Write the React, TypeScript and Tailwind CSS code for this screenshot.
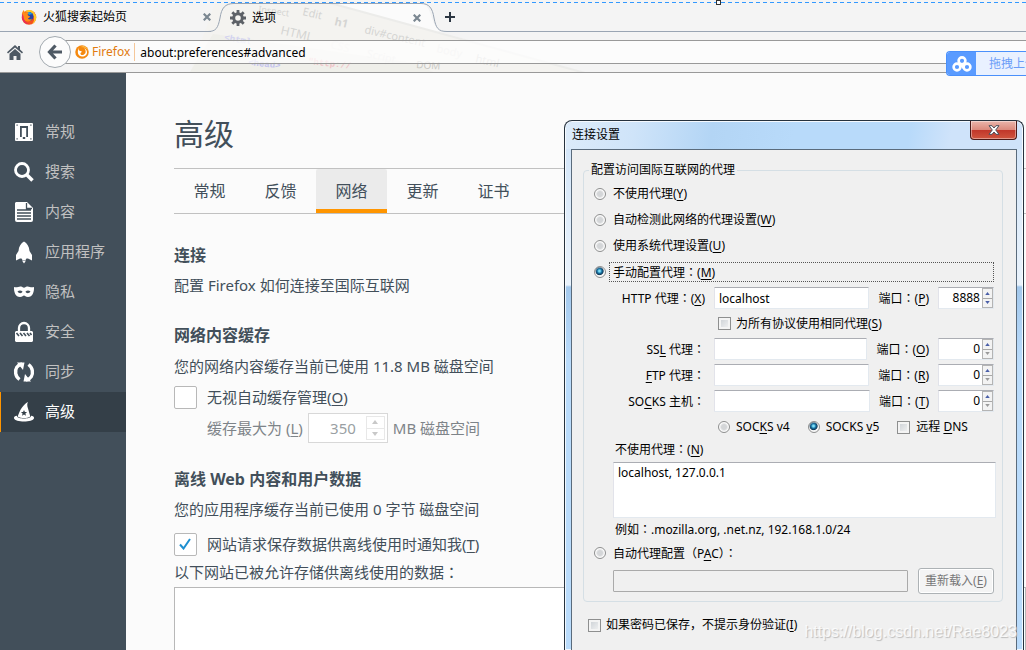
import { useState, type ReactNode } from 'react'

const Key = ({ children }: { children: string }) => <span className="underline underline-offset-2">{children}</span>

/** Full width colon, centred in its cell */
const Colon = () => (
  <span lang="zh-TW" className="font-['Noto_Sans_CJK_TC',sans-serif]">
    ：
  </span>
)

const FirefoxLogo = () => (
  <svg viewBox="0 0 32 32" className="h-4 w-4 shrink-0">
    <circle cx="16" cy="17" r="14.500" fill="#f4511e" />
    <path d="M8 5c4-4 13-4 17 0l5 8c2 9-3 15-8 17 5-5 5-11 3-16-3-6-10-8-17-9z" fill="#ffc928" />
    <circle cx="16" cy="15" r="9" fill="#2743a6" />
    <path d="M12 7c4-2 9 0 11 4-3-1-5 0-7 1z" fill="#1ba4e8" />
    <path d="M2 8l3-6 3 5c3-2 6-1 8 1-3 1-3 3-2 5 2 1 4 1 4 3l-4 3c1 2 5 3 8 0-2 8-14 8-17 0C3 16 1 12 2 8z" fill="#ff8a17" />
    <path d="M2 9l1 12c2 6 8 10 14 9C8 28 5 21 5 14z" fill="#e5226b" />
  </svg>
)

const IdentityLogo = () => (
  <svg viewBox="0 0 28 28" className="h-[14px] w-[14px] shrink-0">
    <circle cx="14" cy="14" r="13.500" fill="#f5890f" />
    <path d="M9 5c-3 5-1 7 3 7 3 1 1 3-1 4-1 3 3 6 7 3 5-3 4-9 0-13 6 3 8 10 4 14-5 5-14 4-16-3-1-5 0-9 3-12z" fill="#fff" />
    <path d="M11 4l6-2c5 1 8 5 9 10-2-5-7-8-15-8z" fill="#ffc04a" />
  </svg>
)

const Gear = () => (
  <svg viewBox="0 0 16 16" className="h-4 w-4 shrink-0" fill="none" stroke="#5d6167">
    <circle cx="8" cy="8" r="4.300" strokeWidth="3" />
    <path d="M8 0v3M8 13v3M0 8h3M13 8h3M2.300 2.300l2.200 2.200M11.500 11.500l2.200 2.200M2.300 13.700l2.200-2.200M11.500 4.500l2.200-2.200" strokeWidth="2.800" />
  </svg>
)

const CloseMark = ({ color }: { color: string }) => (
  <svg viewBox="0 0 8 8" className="h-2 w-2" stroke={color} strokeWidth="2.200">
    <path d="M.7.7l6.600 6.600M7.300.7L.7 7.300" />
  </svg>
)

/* Faint slanted inspector text behind the toolbar */
const ThemeArt = () => (
  <svg className="absolute top-0 left-[190px] h-[73px] w-[400px]" viewBox="190 0 400 73" aria-hidden="true">
    <path d="M215 3H330L585 73H190z" fill="#f4f3f0" />
    <path d="M234 4h186c15 0 8 27 25 27h-10L330 3z" fill="#fcfcfc" opacity=".8" />
    <path d="M330 3h90c15 2 8 28 20 29L585 73z" fill="#fbfbfb" />
    <path d="M213 34l200 29 20 9H190z" fill="#ecece7" opacity=".7" />
    <path d="M330 3l255 70" stroke="#ececea" strokeWidth="2" />
    <g fontFamily="Noto Sans" fontSize="11" fill="#d5d5d3">
      <text x="258" y="12" transform="rotate(8 258 12)" fontSize="9">Inspect</text>
      <text x="302" y="15" transform="rotate(13 302 15)">Edit</text>
      <text x="280" y="34" transform="rotate(13 280 34)" fontSize="12">HTML</text>
      <text x="334" y="25" transform="rotate(13 334 25)" fontWeight="bold">h1</text>
      <text x="364" y="33" transform="rotate(13 364 33)" fontSize="11">div#content</text>
      <text x="436" y="52" transform="rotate(13 436 52)" fill="#e5e5e4">body</text>
      <text x="475" y="62" transform="rotate(13 475 62)">html</text>
      <text x="330" y="48" transform="rotate(13 330 48)" fill="#ececeb">CSS</text>
      <text x="366" y="57" transform="rotate(13 366 57)" fill="#e6e6e5">Script</text>
      <text x="416" y="68" transform="rotate(4 416 68)" fill="#c9c9c5" fontSize="10">DOM</text>
    </g>
    <g fontFamily="Liberation Mono" fontSize="9" fontWeight="bold">
      <text x="224" y="40" transform="rotate(10 224 40)" fill="#d3d3f0">&lt;html</text>
      <text x="248" y="65" transform="rotate(6 248 65)" fill="#c3c3ee">&lt;head&gt;</text>
      <text x="308" y="64" transform="rotate(6 308 64)" fill="#f0c4c8">"http://</text>
    </g>
  </svg>
)

const navItems: { name: string; icon: ReactNode }[] = [
  {
    name: '常规',
    icon: (
      <>
        <path fillRule="evenodd" d="M2 1h16a1 1 0 011 1v16a1 1 0 01-1 1H2a1 1 0 01-1-1V2a1 1 0 011-1zM6 4v11h1.800V6h4.400v9H14V4z" />
        <path d="M8.800 15h2.400v2H8.800z" fill="#424f5a" />
        <path d="M2.500 2.500h1.200v1.200H2.500zM16.300 2.500h1.200v1.200h-1.200zM2.500 16.300h1.200v1.200H2.500zM16.300 16.300h1.200v1.200h-1.200z" fill="#424f5a" />
      </>
    ),
  },
  {
    name: '搜索',
    icon: (
      <g fill="none" stroke="currentColor">
        <circle cx="8" cy="8" r="6.500" strokeWidth="2.800" />
        <path d="M12.500 12.500l6 6" strokeWidth="3.500" />
      </g>
    ),
  },
  {
    name: '内容',
    icon: (
      <>
        <path d="M2 0h11l6 6v12a2 2 0 01-2 2H3a2 2 0 01-2-2V1z" />
        <path d="M12.500 1v5.500H18M3 8h14M3 11h14M3 14h14M3 17h14" stroke="#424f5a" strokeWidth="1.300" fill="none" />
      </>
    ),
  },
  {
    name: '应用程序',
    icon: <path d="M10-.5C7 1 4.800 4.500 4.500 9L2 13v5.500l4-2h1.500l1 1.500h3l1-1.500H14l4 2V13l-2.500-4C15.200 4.500 13 1 10-.5zM8 18.500h4L10 21.500z" />,
  },
  {
    name: '隐私',
    icon: (
      <path
        fillRule="evenodd"
        d="M0 5c3 1 5-1 7-.5 1.500.3 2 1.200 3 1.200s1.500-.9 3-1.200c2-.5 4 1.500 7 .5.300 5-1.500 10-6 10-2.500 0-3-1.500-4-1.500S8.500 15 6 15C1.500 15-.3 10 0 5zm3.500 4.500C5 12 8 11.500 8.500 9.500 7 8 5 8 3.500 9.500zm8 0c.5 2 3.500 2.500 5 0-1.500-1.500-3.500-1.500-5 0z"
      />
    ),
  },
  {
    name: '安全',
    icon: (
      <>
        <path d="M5 9V6a5 5 0 0110 0v3" fill="none" stroke="currentColor" strokeWidth="2.300" />
        <path d="M2 9h16l1 1v9l-1 1H2l-1-1v-9z" />
        <path d="M2.500 11l2.500 3M6 11l2.500 3M9.500 11l2.500 3M13 11l2.500 3M16 11l1.500 2" stroke="#424f5a" strokeWidth="1.600" />
      </>
    ),
  },
  {
    name: '同步',
    icon: (
      <>
        <path d="M8 2C3 3 1 7 1.700 11.500 2.100 14 3.500 16 5.500 17.500M12 18c5-1 7-5 6.300-9.500C17.900 6 16.500 4 14.500 2.500" fill="none" stroke="currentColor" strokeWidth="3.400" />
        <path d="M3 .5h7.500L9 8zM17 19.500H9.500L11 12z" />
      </>
    ),
  },
  {
    name: '高级',
    icon: (
      <>
        <path d="M14 0c-1.200 2-.8 4 0 6.500l2.300 8c-3.500 2-9 2-12.600 0C5 11 6 8 8 5.500 9.500 3.500 11.500 1 14 0z" />
        <path d="M10 8l.9 2.100h2.200l-1.700 1.500.6 2.200-2-1.300-2 1.300.6-2.200-1.700-1.500h2.200z" fill="#343f48" />
        <path d="M3 13.800c-2 .3-3.300 1.200-3 2.400 1 4.400 19 4.400 20 0 .3-1.200-1-2.100-3-2.400.5 3.700-14.500 3.700-14 0z" />
      </>
    ),
  },
]

const BrowserChrome = () => (
  <header className="relative shrink-0 bg-[#f4f4f4] text-xs text-black">
    <ThemeArt />
    <div className="absolute inset-x-0 top-[2px] h-px bg-[repeating-linear-gradient(90deg,#3399ff_0_4px,transparent_4px_7px)]" />
    <span className="absolute top-0 left-[716px] h-[5px] w-[5px] border border-[#333] bg-white" />

    <div className="relative flex h-8 items-stretch pt-[3px]">
      <div className="flex w-[211px] items-center gap-[6px] border-b border-[#9aa5b3] pl-[21px]">
        <FirefoxLogo />
        <button className="flex-1 text-left">火狐搜索起始页</button>
        <button aria-label="关闭标签页">
          <CloseMark color="#7b8791" />
        </button>
      </div>
      <svg viewBox="0 0 26 29" className="-ml-[3px] h-[29px] w-[26px] shrink-0" fill="none" stroke="#9aa5b3">
        <path d="M0 28.500C8 28.500 10 25 12 15 13.500 5 17 .5 26 .5" />
      </svg>
      <div className="flex w-[187px] items-center gap-[6px] border-t border-[#9aa5b3]">
        <span className="-ml-1 flex">
          <Gear />
        </span>
        <button className="flex-1 text-left">选项</button>
        <button aria-label="关闭标签页">
          <CloseMark color="#7b8791" />
        </button>
      </div>
      <svg viewBox="0 0 26 29" className="h-[29px] w-[26px] shrink-0" fill="none" stroke="#9aa5b3">
        <path d="M26 28.500C17 28.500 15 25 13 15 11.500 5 8 .5 0 .5" />
      </svg>
      <div className="flex flex-1 items-center border-b border-[#9aa5b3]">
        <button aria-label="打开新标签页" className="-ml-[2px]">
          <svg viewBox="0 0 10 10" className="h-[10px] w-[10px]" stroke="#2b3642" strokeWidth="2">
            <path d="M5 0v10M0 5h10" />
          </svg>
        </button>
      </div>
    </div>

    <div className="relative flex h-[41px] items-center border-b border-[#999] pl-[7px]">
      <button aria-label="主页">
        <svg viewBox="0 0 16 15" className="h-[15px] w-4" fill="#4e5964">
          <path d="M8 0l3 2.700V1h2v3.600L16 7.300l-1 1.200-7-6-7 6L0 7.300z" />
          <path d="M8 4l5.500 4.700V15H9.500v-4h-3v4h-4V8.700z" />
        </svg>
      </button>
      <button
        aria-label="后退"
        className="relative z-10 ml-4 flex h-8 w-8 shrink-0 items-center justify-center rounded-full border border-[#a3aab0] bg-[#fcfcfc]"
      >
        <svg viewBox="0 0 16 16" className="h-4 w-4" fill="none" stroke="#4e5964" strokeWidth="3.200">
          <path d="M8.500 1.500L2.500 8l6 6.500M3 8h12" />
        </svg>
      </button>
      <div className="-ml-2 flex h-6 flex-1 items-center border-y border-[#999] bg-white/70 pl-3">
        <IdentityLogo />
        <span className="ml-[3px] text-[#e17b10]">Firefox</span>
        <span className="mr-[5px] ml-1 h-[18px] w-px bg-[#f5c79a]" />
        <input className="h-5 flex-1 bg-transparent text-xs outline-none" aria-label="地址" defaultValue="about:preferences#advanced" />
      </div>
    </div>
  </header>
)

const CheckBox = ({ checked, onChange, children }: { checked: boolean; onChange: () => void; children: ReactNode }) => (
  <label className="flex h-6 items-center gap-[10px]">
    <span className="relative flex h-[23px] w-[23px]">
      <input
        type="checkbox"
        checked={checked}
        onChange={onChange}
        className="h-[23px] w-[23px] appearance-none rounded-[2px] border border-[#b8b8b8] bg-white"
      />
      {checked && (
        <svg viewBox="0 0 12 12" className="pointer-events-none absolute top-[5px] left-[5px] h-3 w-3" fill="none" stroke="#1e8fd0" strokeWidth="2">
          <path d="M1 6.500L4.500 10.500 11 1" />
        </svg>
      )}
    </span>
    <span>{children}</span>
  </label>
)

const Preferences = () => {
  const [override, setOverride] = useState(false)
  const [notify, setNotify] = useState(true)

  return (
    <main className="min-w-0 flex-1 bg-[#fbfbfb] pt-[38px] pl-12 text-[15px] leading-[22px] text-[#424f5a]">
      <h1 className="text-[30px] leading-[45px]">高级</h1>
      <div className="mt-3 flex h-[46px] border-y border-[#c1c1c1] text-base">
        {['常规', '反馈', '网络', '更新', '证书'].map((tab) => (
          <button
            key={tab}
            className={`w-[71px] border-b-4 pt-1 ${tab === '网络' ? 'rounded-t-xs border-[#ff9500] bg-[#ebebeb]' : 'border-transparent'}`}
          >
            {tab}
          </button>
        ))}
      </div>

      <section className="mt-[29px]">
        <h2 className="text-base font-bold">连接</h2>
        <p className="mt-[7px]">配置 Firefox 如何连接至国际互联网</p>
      </section>

      <section className="mt-[27px]">
        <h2 className="text-base font-bold">网络内容缓存</h2>
        <p className="mt-2">您的网络内容缓存当前已使用 11.8 MB 磁盘空间</p>
        <div className="mt-2">
          <CheckBox checked={override} onChange={() => setOverride(!override)}>
            无视自动缓存管理(<Key>O</Key>)
          </CheckBox>
        </div>
        <div className="mt-1 flex h-[30px] items-center pl-[33px] text-[#7e8489]">
          <label htmlFor="cache">
            缓存最大为 (<Key>L</Key>)
          </label>
          <span className="mx-[5px] flex h-[30px] w-20 items-center border border-[#d8d8d8] bg-white pr-[2px]">
            <input id="cache" disabled defaultValue="350" className="w-[57px] pr-[10px] text-right text-[#9a9fa3]" />
            <span className="flex h-6 w-[19px] flex-col border border-[#e8e8e8] text-[#c8c8c8]">
              <button disabled aria-label="增加" className="flex flex-1 items-center justify-center border-b border-[#e8e8e8]">
                <svg viewBox="0 0 6 4" className="h-1 w-[6px]" fill="currentColor"><path d="M0 4l3-4 3 4z" /></svg>
              </button>
              <button disabled aria-label="减少" className="flex flex-1 items-center justify-center">
                <svg viewBox="0 0 6 4" className="h-1 w-[6px]" fill="currentColor"><path d="M0 0l3 4 3-4z" /></svg>
              </button>
            </span>
          </span>
          <span>MB 磁盘空间</span>
        </div>
      </section>

      <section className="mt-6">
        <h2 className="text-base font-bold">离线 Web 内容和用户数据</h2>
        <p className="mt-[7px]">您的应用程序缓存当前已使用 0 字节 磁盘空间</p>
        <div className="mt-3">
          <CheckBox checked={notify} onChange={() => setNotify(!notify)}>
            网站请求保存数据供离线使用时通知我(<Key>T</Key>)
          </CheckBox>
        </div>
        <p className="mt-[5px]">
          以下网站已被允许存储供离线使用的数据<Colon />
        </p>
        <div className="mt-1 h-[120px] border border-[#b8b8b8] bg-white" />
      </section>
    </main>
  )
}

const Radio = ({ id, name, checked, onChange }: { id: string; name: string; checked: boolean; onChange: () => void }) => (
  <input
    id={id}
    type="radio"
    name={name}
    checked={checked}
    onChange={onChange}
    className="h-3 w-3 shrink-0 appearance-none rounded-full border border-[#8e8f8f] bg-[radial-gradient(circle,#d4d6d8_0_35%,#f8f8f8_60%)] ring-1 ring-white/50 ring-inset checked:bg-[radial-gradient(circle_at_45%_40%,#7fe0f8_0_10%,#1673a5_28%,#123a58_46%,#f4f4f4_56%)]"
  />
)

const SmallCheck = ({ id }: { id: string }) => (
  <input
    id={id}
    type="checkbox"
    className="h-[13px] w-[13px] shrink-0 appearance-none border border-[#8e8f8f] bg-linear-to-br from-[#c9ced3] to-[#f6f6f6] inset-ring-2 inset-ring-[#f4f4f4] checked:from-[#1673a5]"
  />
)

const field = 'border border-[#e3e9ef] border-t-[#abadb3] border-l-[#e2e3ea] bg-white'

interface ProxyRowProps {
  id: string
  label: ReactNode
  host?: string
  port: string
  portKey: string
}

const ProxyRow = ({ id, label, host = '', port, portKey }: ProxyRowProps) => (
  <div className="flex h-[26px] items-center gap-[9px]">
    <label htmlFor={id} className="w-[111px] shrink-0 text-right">
      {label}
    </label>
    <input id={id} defaultValue={host} className={`h-[22px] min-w-0 flex-1 rounded-[1px] px-1 ${field}`} />
    <label htmlFor={`${id}-port`}>
      端口
      <Colon />(<Key>{portKey}</Key>)
    </label>
    <span className={`flex h-[22px] w-14 items-center ${field}`}>
      <input id={`${id}-port`} defaultValue={port} className="w-[43px] pr-[2px] text-right" />
      <span className="flex h-5 w-[11px] flex-col border border-[#b4b4b4] bg-[#f3f3f3]">
        <button aria-label="增加" className="flex flex-1 items-center justify-center border-b border-[#a8a8a8]">
          <svg viewBox="0 0 6 4" className="h-[3px] w-[5px]" fill="#4a5fa8"><path d="M0 4l3-4 3 4z" /></svg>
        </button>
        <button aria-label="减少" className="flex flex-1 items-center justify-center">
          <svg viewBox="0 0 6 4" className="h-[3px] w-[5px]" fill={port === '0' ? '#9a9a9a' : '#4a5fa8'}><path d="M0 0l3 4 3-4z" /></svg>
        </button>
      </span>
    </span>
  </div>
)

const modes: { id: string; label: ReactNode }[] = [
  { id: 'none', label: <>不使用代理(<Key>Y</Key>)</> },
  { id: 'detect', label: <>自动检测此网络的代理设置(<Key>W</Key>)</> },
  { id: 'system', label: <>使用系统代理设置(<Key>U</Key>)</> },
  { id: 'manual', label: <>手动配置代理<Colon />(<Key>M</Key>)</> },
]

const ConnectionDialog = () => {
  const [mode, setMode] = useState('manual')
  const [socks, setSocks] = useState('v5')

  return (
    <div
      role="dialog"
      aria-labelledby="dialog-title"
      className="absolute top-[120px] right-[2px] bottom-0 flex w-[460px] flex-col rounded-t-lg border border-b-0 border-[#26323e] bg-[linear-gradient(#cfe3f8,#eaf3fc_164px,#a3c8ec_166px,#b9dbfb_240px)] px-[6px] text-xs leading-[18px] text-black inset-ring inset-ring-white/80"
    >
      <div className="-mx-[5px] mt-px flex h-[27px] shrink-0 items-start justify-between rounded-t-md bg-[linear-gradient(100deg,#dcebfa,#cfe4f9_15%,#b3d5f5_32%,#b8dafa_50%,#b8dafa_75%,#cfe3fa_84%,#cfe3fa)] pl-[6px]">
        <span id="dialog-title" className="mt-1">连接设置</span>
        <button
          aria-label="关闭"
          className="-mt-px mr-[5px] flex h-[19px] w-[47px] items-center justify-center rounded-b-[4px] border border-t-0 border-[#4b1a18] bg-[linear-gradient(#eab5ab,#dc8a7d_48%,#c1372a_52%,#d0553f)] inset-ring inset-ring-white/40"
        >
          <svg viewBox="0 0 12 10" className="h-[10px] w-3" fill="#fff" stroke="#4a4f5a" strokeWidth="1">
            <path d="M1 .7h3l2 2.300L8 .7h3L7.700 5 11 9.300H8L6 7 4 9.300H1L4.300 5z" />
          </svg>
        </button>
      </div>

      <div className="flex-1 border border-b-0 border-[#5a6b7c] bg-[#f0f0f0] pt-[11px] pr-[13px] pl-[11px]">
        <fieldset className="min-w-0 rounded-[4px] border border-[#d5dfe5] pr-2 pb-[7px] pl-[10px]">
          <legend className="-ml-[5px] px-[2px]">配置访问国际互联网的代理</legend>
          <div className="pt-[2px]">
            {modes.map((item) => (
              <div key={item.id} className="flex h-[26px] items-center gap-[3px]">
                <Radio id={item.id} name="mode" checked={mode === item.id} onChange={() => setMode(item.id)} />
                <label
                  htmlFor={item.id}
                  className={`h-5 flex-1 border border-dotted px-[3px] ${mode === item.id ? 'border-[#555]' : 'border-transparent'}`}
                >
                  {item.label}
                </label>
              </div>
            ))}
          </div>

          <ProxyRow id="http" label={<>HTTP 代理<Colon />(<Key>X</Key>)</>} host="localhost" port="8888" portKey="P" />
          <div className="flex h-[25px] items-center gap-[5px] pl-[124px]">
            <SmallCheck id="share" />
            <label htmlFor="share">为所有协议使用相同代理(<Key>S</Key>)</label>
          </div>
          <ProxyRow id="ssl" label={<>SS<Key>L</Key> 代理<Colon /></>} port="0" portKey="O" />
          <ProxyRow id="ftp" label={<><Key>F</Key>TP 代理<Colon /></>} port="0" portKey="R" />
          <ProxyRow id="socks" label={<>SO<Key>C</Key>KS 主机<Colon /></>} port="0" portKey="T" />
          <div className="flex h-[26px] items-center gap-[6px] pl-[124px]">
            <Radio id="v4" name="socks" checked={socks === 'v4'} onChange={() => setSocks('v4')} />
            <label htmlFor="v4" className="mr-3">SOC<Key>K</Key>S v4</label>
            <Radio id="v5" name="socks" checked={socks === 'v5'} onChange={() => setSocks('v5')} />
            <label htmlFor="v5" className="mr-3">SOCKS <Key>v</Key>5</label>
            <SmallCheck id="dns" />
            <label htmlFor="dns">远程 <Key>D</Key>NS</label>
          </div>

          <div className="-mr-[2px] pl-[19px]">
            <label htmlFor="bypass" className="block pl-[2px]">
              不使用代理<Colon />(<Key>N</Key>)
            </label>
            <textarea
              id="bypass"
              defaultValue="localhost, 127.0.0.1"
              className={`mt-[3px] block h-14 w-full resize-none px-1 py-px ${field}`}
            />
            <p className="pt-[2px] pb-[3px] pl-[2px]">
              例如<Colon />.mozilla.org, .net.nz, 192.168.1.0/24
            </p>
          </div>

          <div className="flex h-[22px] items-center gap-[3px]">
            <Radio id="pac" name="mode" checked={mode === 'pac'} onChange={() => setMode('pac')} />
            <label htmlFor="pac" className="px-1">
              自动代理配置<span lang="zh-TW">（</span>P<Key>A</Key>C<span lang="zh-TW">）</span><Colon />
            </label>
          </div>
          <div className="mt-1 flex h-[26px] items-center gap-[10px] pl-[19px]">
            <input aria-label="自动代理配置" disabled className="h-[22px] min-w-0 flex-1 rounded-[1px] border border-[#aaa] bg-[#f0f0f0]" />
            <button disabled className="h-[26px] w-[76px] rounded-[3px] border border-[#adb2b5] bg-[#f4f4f4] text-[#777] inset-ring inset-ring-white">
              重新载入(<Key>E</Key>)
            </button>
          </div>
        </fieldset>

        <div className="mt-[14px] flex items-center gap-[5px] pl-[5px]">
          <SmallCheck id="prompt" />
          <label htmlFor="prompt">如果密码已保存，不提示身份验证(<Key>I</Key>)</label>
        </div>
      </div>
    </div>
  )
}

export default function App() {
  const [active, setActive] = useState('高级')

  return (
    <div
      lang="zh-CN"
      className="relative flex h-screen flex-col overflow-hidden bg-[#fbfbfb] font-['Noto_Sans','Noto_Sans_CJK_SC',sans-serif]"
    >
      <BrowserChrome />
      <div className="flex min-h-0 flex-1">
        <nav className="w-[126px] shrink-0 bg-[#424f5a] pt-[39px] text-[15px]">
          {navItems.map(({ name, icon }) => (
            <button
              key={name}
              onClick={() => setActive(name)}
              className={`flex h-10 w-full items-center gap-[11px] border-l pl-[13px] ${
                active === name ? 'border-[#ff9500] bg-[#343f48] text-white' : 'border-transparent text-[#c1c1c1]'
              }`}
            >
              <svg viewBox="0 0 20 20" className="h-5 w-5 shrink-0 overflow-visible text-white" fill="currentColor">
                {icon}
              </svg>
              <span className="pb-[2px]">{name}</span>
            </button>
          ))}
        </nav>
        <Preferences />
      </div>

      <a
        href="#upload"
        className="absolute top-[51px] right-0 flex h-[25px] w-20 items-center overflow-hidden rounded-l-[4px] border border-r-0 border-[#4a90fb] bg-[#e9f1ff] text-xs whitespace-nowrap text-[#6b9df8]"
      >
        <span className="mr-[13px] flex h-full w-[29px] shrink-0 items-center justify-center bg-[#5a9bff]">
          <svg viewBox="0 0 20 16" className="h-4 w-5" fill="none" stroke="#fff" strokeWidth="2.600">
            <circle cx="10" cy="4.800" r="3.400" />
            <circle cx="5" cy="11" r="3.400" />
            <circle cx="15" cy="11" r="3.400" />
            <path d="M8 8l4 4" />
          </svg>
        </span>
        拖拽上传
      </a>

      <ConnectionDialog />

      <span className="pointer-events-none absolute right-[9px] bottom-[6px] font-['Liberation_Sans',sans-serif] text-base text-white/80 [text-shadow:1px_1px_1px_#bbb]">
        https://blog.csdn.net/Rae8023
      </span>
    </div>
  )
}
